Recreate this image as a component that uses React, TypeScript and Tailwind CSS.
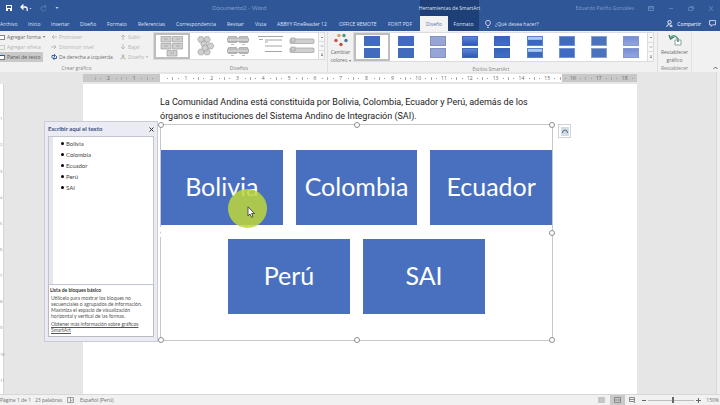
import React from "react";

const tabs = [
  "Archivo", "Inicio", "Insertar", "Diseño", "Formato", "Referencias",
  "Correspondencia", "Revisar", "Vista", "ABBYY FineReader 12", "OFFICE REMOTE", "FOXIT PDF",
];
const items = ["Bolivia", "Colombia", "Ecuador", "Perú", "SAI"];
const rulerMarks = ["2", "1", "", "1", "2", "3", "4", "5", "6", "7", "8", "9", "10", "11", "12", "13", "14", "15", "16", "17", "18"];
const verticalMarks = ["", "1", "2", "3", "4", "5", "6", "7", "8", "9", "10", "11"];

function TitleBar() {
  return (
    <div className="flex h-4 items-stretch text-[#7f9ccb]">
      <div className="flex w-[212px] items-center gap-2 pl-[6px] text-white">
        <button aria-label="Guardar">
          <svg className="block h-[6px] w-[6px]" viewBox="0 0 6 6">
            <path d="M0 0h6v6H0z" fill="#fff" />
            <path d="M1 1h4v2H1zM2 4h2v2H2z" fill="#2f5697" />
          </svg>
        </button>
        <button aria-label="Deshacer">
          <svg className="block h-2 w-3" viewBox="0 0 12 8" fill="none" stroke="#fff">
            <path d="M1 3h4q3 0 2 4M3.500 .5 1 3l2.500 2.500" strokeWidth="1.300" />
            <path d="M9.500 4h2l-1 1z" fill="#fff" stroke="none" />
          </svg>
        </button>
        <button aria-label="Rehacer">
          <svg className="block h-[7px] w-[7px]" viewBox="0 0 7 7" fill="none" stroke="#597bb2">
            <path d="M5.500 2a2.500 2.500 0 1 0 .5 2M5.500 0v2.200H3.500" />
          </svg>
        </button>
        <button aria-label="Personalizar barra">
          <svg className="block h-1 w-1" viewBox="0 0 4 4"><path d="M.5 1h3L2 3z" fill="#cbd6e9" /></svg>
        </button>
      </div>
      <div className="flex w-[208px] items-center font-['Lato',sans-serif] text-[6px]">Documento2 - Word</div>
      <div className="flex w-[59px] items-center justify-center bg-[#1f3f78] whitespace-nowrap text-[#dfe6f2]">Herramientas de SmartArt</div>
      <div className="flex flex-1 items-center justify-end gap-[14px] pr-[6px]">
        <span className="whitespace-nowrap">Eduardo Patiño Gonzáles</span>
        <button aria-label="Opciones de la cinta"><svg className="block h-[5px] w-[6px]" viewBox="0 0 6 5" fill="none" stroke="#6585b9"><path d="M.5 .5h5v4h-5zM.5 2h5" /></svg></button>
        <button aria-label="Minimizar"><svg className="block h-[5px] w-[6px]" viewBox="0 0 6 5" stroke="#5c7db4"><path d="M1 2.500h4" /></svg></button>
        <button aria-label="Restaurar"><svg className="block h-[5px] w-[6px]" viewBox="0 0 6 5" fill="none" stroke="#5c7db4"><path d="M.5 1.500h4v3h-4zM2 .5h3.500v3" /></svg></button>
        <button aria-label="Cerrar"><svg className="block h-[5px] w-[6px]" viewBox="0 0 6 5" stroke="#5c7db4"><path d="M1 0l4 5M5 0L1 5" /></svg></button>
      </div>
    </div>
  );
}

function TabBar() {
  return (
    <nav className="flex h-[15px] items-stretch text-[#dbe4f2]">
      <div className="grid w-[420px] grid-cols-[28px_23px_29px_27px_31px_38px_51px_28px_22px_62px_49px_32px] items-center">
        {tabs.map((t) => (
          <button key={t} className="whitespace-nowrap text-left">{t}</button>
        ))}
      </div>
      <button className="w-7 bg-[#f3f3f3] text-[#5673a6]">Diseño</button>
      <button className="w-[31px] bg-[#1f3f78]">Formato</button>
      <button className="ml-[6px] flex items-center gap-1 whitespace-nowrap">
        <svg className="block h-2 w-[6px]" viewBox="0 0 6 8" fill="none" stroke="#e6ecf6" strokeWidth=".8">
          <path d="M2 5.500Q.6 4 .6 2.700a2.400 2.300 0 0 1 4.800 0Q5.400 4 4 5.500zM2 7.300h2" />
        </svg>
        ¿Qué desea hacer?
      </button>
      <div className="flex flex-1 items-center justify-end gap-2 pr-1">
        <button className="flex items-center gap-1 text-white">
          <svg className="block h-[7px] w-[7px]" viewBox="0 0 7 7" fill="none" stroke="#fff" strokeWidth=".9">
            <circle cx="3.500" cy="2.200" r="1.700" /><path d="M.6 6.800Q1 4.500 3.500 4.400M3.500 6h3M5 4.500v3" />
          </svg>
          Compartir
        </button>
        <button aria-label="Comentarios">
          <svg className="block h-[7px] w-[7px]" viewBox="0 0 7 7" fill="none" stroke="#e6ecf6" strokeWidth=".8"><path d="M.5 .6h6v4.200H3.600L2.200 6.400V4.800H.5z" /></svg>
        </button>
      </div>
    </nav>
  );
}

function Arrow({ d, color = "#b5b5b5" }: { d: string; color?: string }) {
  return (
    <svg className="block h-[6px] w-[6px] shrink-0" viewBox="0 0 6 6" fill="none" stroke={color} strokeWidth=".9"><path d={d} /></svg>
  );
}

function LayoutThumb({ kind }: { kind: number }) {
  const shape = { fill: "#cfcfcf", stroke: "#9e9e9e", strokeWidth: 0.7 };
  return (
    <svg className="block h-[22px] w-[26px]" viewBox="0 0 26 22">
      {kind === 0 && (
        <g {...shape}>
          <path d="M2 1.500h10v5.500H2zM13.500 1.500h10v5.500h-10zM2 8.500h10V14H2zM13.500 8.500h10V14h-10zM8 15.500h10V21H8z" />
          <path d="M5 4h4M17 4h4M5 11h4M17 11h4M11 18h4" />
        </g>
      )}
      {kind === 1 && (
        <g {...shape}>
          {[[8, 4.500], [14, 4.500], [11, 9], [17.500, 11], [8, 17], [14, 17], [12, 13]].map(([x, y]) => (
            <path key={`${x}-${y}`} d={`M${x - 3.300} ${y}l1.600-2.800h3.400l1.600 2.800-1.600 2.800h-3.400z`} />
          ))}
        </g>
      )}
      {kind === 2 && (
        <g {...shape}>
          <path d="M3.500 1.500h8v6h-8zM14.500 1.500h8v6h-8zM3.500 12.500h8v6h-8zM14.500 12.500h8v6h-8z" />
          <path d="M2.500 3h21v3.500h-21zM2.500 14h21v3.500h-21zM6 9.500h3M17 9.500h3M6 20.500h3M17 20.500h3" />
        </g>
      )}
      {kind === 3 && (
        <path d="M1 1.500h25M8 5h17M8 11h17M8 16.500h17M2 4.500h4M8 7h3" stroke="#a5a5a5" strokeWidth="1" fill="none" />
      )}
      {kind === 4 && (
        <g {...shape}><rect x="1" y="4" width="24" height="4.500" rx="1" /><rect x="1" y="13" width="24" height="4.500" rx="1" /><path d="M2 3h4v4H2zM2 12h4v4H2z" /></g>
      )}
    </svg>
  );
}

function Gallery({ label, children }: { label: string; children: React.ReactNode }) {
  return (
    <div className="flex h-[30px] flex-1 border border-[#dcdcdc] bg-white">
      <div role="listbox" aria-label={label} className="flex flex-1">{children}</div>
      <div className="flex w-[6px] flex-col border-l border-[#dcdcdc] bg-[#f7f7f7]">
        {["M1 3l1-1 1 1", "M1 1.500l1 1 1-1", "M1 1h2M1 2l1 1 1-1"].map((d, i) => (
          <button key={d} aria-label={["Anterior", "Siguiente", "Más"][i]} className="flex flex-1 items-center justify-center border-b border-[#dedede] last:border-0">
            <svg className="block h-1 w-1" viewBox="0 0 4 4" fill="none" stroke="#777" strokeWidth=".8"><path d={d} /></svg>
          </button>
        ))}
      </div>
    </div>
  );
}

const styleFills = [
  "bg-[#426bbd] border-[#426bbd]",
  "bg-[#426bbd] border-[#426bbd]",
  "bg-[#97a5d6] border-[#8492bf]",
  "bg-linear-to-b from-[#5b86d8] to-[#3059b0] border-[#4269b8]",
  "bg-linear-to-b from-[#3563bd] to-[#446ec3] border-[#3b66b8]",
  "bg-linear-to-b from-[#a8c8f4] from-30% to-[#3b67bd] to-40% border-[#5b83ca]",
  "bg-[#3f6bc2] border-[#6f91d2]",
  "bg-[#4a73bf] border-[#8a9fc4]",
  "bg-linear-to-b from-[#768fd2] to-[#93a5df] border-[#8397d0]",
];

function GroupLabel({ children }: { children: React.ReactNode }) {
  return <div className="flex flex-1 items-end justify-center text-[#858585]">{children}</div>;
}

function Ribbon() {
  const dim = "text-[#b4b4b4]";
  const row = "flex h-[10px] items-center gap-[2px] whitespace-nowrap";
  return (
    <div className="flex h-[41px] bg-[#f1f1f1] pt-px text-[#6a6a6a]">
      <section className="flex w-[153px] flex-col">
        <div className="grid grid-cols-[51px_69px_1fr]">
          <button className={row}><span className="h-[5px] w-[5px] border border-l-0 border-[#888] bg-white" />Agregar forma <span className="text-[4px]">▾</span></button>
          <button className={`${row} ${dim}`}><Arrow d="M6 3H1M3 1L1 3l2 2" />Promover</button>
          <button className={`${row} ${dim}`}><Arrow d="M3 6V1M1 3l2-2 2 2" />Subir</button>
          <button className={`${row} ${dim}`}><span className="h-[5px] w-[5px] border border-l-0 border-[#ccc]" />Agregar viñeta</button>
          <button className={`${row} ${dim}`}><Arrow d="M0 3h5M3 1l2 2-2 2" />Disminuir nivel</button>
          <button className={`${row} ${dim}`}><Arrow d="M3 0v5M1 3l2 2 2-2" />Bajar</button>
          <button className={`${row} mr-2 bg-[#c8c8c8] text-[#555]`}><span className="h-[5px] w-[5px] border border-l-0 border-t-[#2b579a] border-[#777] bg-white" />Panel de texto</button>
          <button className={row}><Arrow color="#2b579a" d="M1 4V1.500h3M3 0l1.500 1.500L3 3M5.500 2v2.500H2M3.500 3L2 4.500 3.500 6" />De derecha a izquierda</button>
          <button className={`${row} ${dim}`}><Arrow d="M2 1h2v1.500H2zM3 2.500v1.500M1 5.500V4h4v1.500" />Diseño <span className="text-[4px]">▾</span></button>
        </div>
        <GroupLabel>Crear gráfico</GroupLabel>
      </section>
      <section className="flex w-[175px] flex-col border-r border-[#dedede] pr-[2px]">
        <Gallery label="Diseños">
          {[0, 1, 2, 3, 4].map((k) => (
            <button key={k} role="option" aria-selected={k === 0} aria-label={`Diseño ${k + 1}`} className={k === 0 ? "flex flex-1 items-center justify-center border-2 border-[#bdbdbd]" : "flex flex-1 items-center justify-center"}>
              <LayoutThumb kind={k} />
            </button>
          ))}
        </Gallery>
        <GroupLabel>Diseños</GroupLabel>
      </section>
      <section className="flex flex-1 flex-col border-r border-[#dedede] pr-[3px]">
        <div className="flex">
          <button className="flex w-[25px] flex-col items-center pt-px leading-[8px] whitespace-nowrap">
            <svg className="mb-px block h-[14px] w-[14px]" viewBox="0 0 14 14">
              <circle cx="5" cy="2.500" r="1.700" fill="#d9a066" /><circle cx="10" cy="2.500" r="1.700" fill="#4f9384" />
              <circle cx="2" cy="7.500" r="1.700" fill="#c2504c" /><circle cx="12" cy="7.500" r="1.700" fill="#49769c" />
              <circle cx="7" cy="11.500" r="1.700" fill="#b5523c" />
            </svg>
            Cambiar<span>colores <span className="text-[4px]">▾</span></span>
          </button>
          <Gallery label="Estilos SmartArt">
            {styleFills.map((f, i) => (
              <button key={i} role="option" aria-selected={i === 0} aria-label={`Estilo ${i + 1}`} className={i === 0 ? "flex flex-1 flex-col items-center justify-center gap-[2px] border-2 border-[#bdbdbd]" : "flex flex-1 flex-col items-center justify-center gap-[2px]"}>
                <span className={`h-[10px] w-4 border ${f}`} />
                <span className={`h-[10px] w-4 border ${f}`} />
              </button>
            ))}
          </Gallery>
        </div>
        <GroupLabel>Estilos SmartArt</GroupLabel>
      </section>
      <section className="flex w-[34px] flex-col items-center border-r border-[#e2e2e2]">
        <button className="flex h-[32px] flex-col items-center pt-px leading-[8px]">
          <svg className="mb-px block h-[14px] w-[14px]" viewBox="0 0 14 14" fill="none">
            <path d="M7 7h6v5H7z" fill="#fff" stroke="#8aa69a" /><path d="M1 2l1.500 4L6 4" stroke="#3b7765" strokeWidth="1.300" />
            <path d="M2 5q4-5 8 1v3" stroke="#549682" strokeWidth="1.600" />
          </svg>
          Restablecer<span>gráfico</span>
        </button>
        <GroupLabel>Restablecer</GroupLabel>
      </section>
      <div className="flex w-[28px] items-end justify-end p-[2px]">
        <button aria-label="Contraer la cinta"><svg className="block h-1 w-[5px]" viewBox="0 0 5 4" fill="none" stroke="#666"><path d="M.5 3l2-2 2 2" /></svg></button>
      </div>
    </div>
  );
}

function Handle({ at }: { at: string }) {
  return <span className={`absolute h-[6px] w-[6px] -translate-1/2 rounded-full border border-[#8f8f8f] bg-white ${at}`} />;
}

function Block({ name }: { name: string }) {
  return <div className="flex h-[75px] items-center justify-center bg-[#4970bf] pb-1 font-['Lato',sans-serif] text-[25px] leading-8 text-white">{name}</div>;
}

function TextPane() {
  return (
    <aside className="absolute top-[49px] left-[44px] flex h-[221px] w-[114px] flex-col border border-[#c9ccd8] bg-[#eaebf3] px-[3px] pb-[4px] font-['Lato',sans-serif] text-[6px]">
      <header className="flex h-[14px] items-center justify-between font-bold text-[#3d5180]">
        Escribir aquí el texto
        <button aria-label="Cerrar panel"><svg className="block h-[5px] w-[5px]" viewBox="0 0 5 5" stroke="#333"><path d="M.5 .5l4 4M4.500 .5l-4 4" /></svg></button>
      </header>
      <div className="flex flex-1 border border-[#c3c5ce] bg-white">
        <div className="w-1 bg-[#e6e7ee]" />
        <ul className="pt-px pl-2">
          {items.map((t) => (
            <li key={t} className="flex h-[11px] items-center gap-[2px] text-[#444]">
              <span className="h-[3px] w-[3px] rounded-full bg-black" />{t}
            </li>
          ))}
        </ul>
      </div>
      <div className="h-[52px] border border-t-0 border-[#b9b9bf] bg-white pt-[2px] pl-px text-[5px] leading-[6px] text-[#555]">
        <h2 className="font-bold text-[#333]">Lista de bloques básico</h2>
        <p className="py-[2px] pl-px whitespace-nowrap">
          Utilícelo para mostrar los bloques no<br />secuenciales o agrupados de información.<br />Maximiza el espacio de visualización<br />horizontal y vertical de las formas.
        </p>
        <a href="#info" className="block pl-px whitespace-nowrap underline">Obtener más información sobre gráficos<br />SmartArt</a>
      </div>
    </aside>
  );
}

function Workspace() {
  return (
    <main className="relative flex h-[322px] bg-[#e6e6e6]">
      <div className="mt-[12px] flex w-1 flex-col justify-around border-r border-[#d5d5d5] bg-white text-[4px] text-[#888]">
        {verticalMarks.map((m, i) => <span key={i} className="leading-1">{m}</span>)}
      </div>
      <div className="mx-[79px] flex min-w-0 flex-1 flex-col">
        <div className="my-[2px] flex h-2 items-center bg-[linear-gradient(to_right,#c8c8c8_77px,#fff_77px,#fff_479px,#c8c8c8_479px)] pl-3 text-[5px] leading-[8px] text-[#666]">
          {rulerMarks.map((m, i) => (
            <div key={i} className="flex flex-1 items-center justify-between">
              <span className="h-[3px] w-px bg-[#aaa]" /><span className="h-px w-px bg-[#999]" />
              <span className="w-[6px] text-center">{m}</span>
              <span className="h-px w-px bg-[#999]" /><span />
            </div>
          ))}
        </div>
        <article className="flex-1 bg-white pt-[11px] pr-[84px] pl-[77px]">
          <p className="pb-px font-['Roboto',sans-serif] text-[9px] leading-[14px] whitespace-nowrap text-[#222]">
            La Comunidad Andina está constituida por Bolivia, Colombia, Ecuador y Perú, además de los<br />
            órganos e instituciones del Sistema Andino de Integración (SAI).
          </p>
          <div className="relative h-[217px] border border-[#c4c8ce] pt-[25px]">
            <div className="grid grid-cols-3 gap-x-[13px]">
              {items.slice(0, 3).map((n) => <Block key={n} name={n} />)}
            </div>
            <div className="mt-[14px] grid grid-cols-2 gap-x-[13px] px-[67px]">
              {items.slice(3).map((n) => <Block key={n} name={n} />)}
            </div>
            <Handle at="top-0 left-0" /><Handle at="top-0 left-1/2" /><Handle at="top-0 left-full" />
            <Handle at="top-1/2 left-full" /><Handle at="top-full left-0" />
            <Handle at="top-full left-1/2" /><Handle at="top-full left-full" />
            <button aria-label="Ocultar panel de texto" className="absolute top-[102px] -left-[3px] h-[10px] w-[5px] bg-white text-[5px] leading-[10px] text-[#777]">›</button>
            <button aria-label="Opciones de diseño" className="absolute -top-px left-[397px] flex h-[14px] w-[13px] items-center justify-center border border-[#cfd3d9] bg-white">
              <svg className="block h-[9px] w-[8px]" viewBox="0 0 8 9" fill="none"><path d="M0 0h8v9H0z" fill="#d3dbe5" /><path d="M1.500 6q0-3 2.500-3t2.500 3" stroke="#4f6485" /></svg>
            </button>
            <div className="absolute top-[64px] left-[67px] h-[39px] w-[39px] rounded-full bg-[#bcd63a]/85" />
            <svg className="absolute top-[81px] left-[86px] h-[12px] w-2" viewBox="0 0 8 12"><path d="M1 .8v9l2-1.800 1.500 3.300 1.500-.7L4.600 7.500h2.900z" fill="#fff" stroke="#333" strokeWidth=".8" /></svg>
          </div>
        </article>
      </div>
      <div className="w-1 border-l border-[#d9d9d9] bg-[#efefef]" />
      <TextPane />
    </main>
  );
}

function StatusBar() {
  return (
    <footer className="flex h-[11px] items-center border-t border-[#d8d8d8] bg-[#f1f1f1] text-[#6d6d6d]">
      <span className="w-[35px] whitespace-nowrap">Página 1 de 1</span>
      <span className="w-[32px] whitespace-nowrap">23 palabras</span>
      <svg className="mr-[6px] block h-[6px] w-[7px]" viewBox="0 0 7 6" fill="none" stroke="#8b8b8b" strokeWidth=".8"><path d="M.5 .5h6v5h-6zM3.500 .5v5M4.500 4l1-1.500" /></svg>
      <button>Español (Perú)</button>
      <div className="flex flex-1 items-center justify-end">
        <button aria-label="Modo de lectura" className="mr-[5px]"><svg className="block h-[6px] w-[7px]" viewBox="0 0 7 6" stroke="#999"><path d="M0 1h7M0 3h7M0 5h7" /></svg></button>
        <button aria-label="Diseño de impresión" className="flex h-[10px] w-[15px] items-center justify-center bg-[#c9c9c9]"><svg className="block h-[6px] w-[7px]" viewBox="0 0 7 6" fill="none" stroke="#8b8b8b"><path d="M.5 .5h6v5h-6zM1 3h5" /></svg></button>
        <button aria-label="Diseño web" className="ml-1"><svg className="block h-[6px] w-[7px]" viewBox="0 0 7 6" fill="none" stroke="#888"><path d="M.5 .5h5v4h-5zM1 2.500h4M4 4l2 2" /></svg></button>
        <button aria-label="Alejar" className="ml-[6px] h-px w-1 bg-[#666]" />
        <input type="range" aria-label="Zoom" min={10} max={200} defaultValue={112}
          className="mx-[2px] h-[6px] w-[46px] appearance-none bg-[linear-gradient(#bdbdbd,#bdbdbd)] bg-size-[100%_1px] bg-center bg-no-repeat [&::-webkit-slider-thumb]:h-[6px] [&::-webkit-slider-thumb]:w-[2px] [&::-webkit-slider-thumb]:appearance-none [&::-webkit-slider-thumb]:bg-[#666]" />
        <button aria-label="Acercar"><svg className="block h-[5px] w-[5px]" viewBox="0 0 5 5" stroke="#666"><path d="M0 2.500h5M2.500 0v5" /></svg></button>
        <span className="ml-[5px] pr-px">150%</span>
      </div>
    </footer>
  );
}

export default function App() {
  return (
    <div className="w-full overflow-hidden font-['Open_Sans','Noto_Sans',sans-serif] text-[5px] leading-[8px]">
      <header className="bg-[#2f5697]">
        <TitleBar />
        <TabBar />
      </header>
      <Ribbon />
      <Workspace />
      <StatusBar />
    </div>
  );
}
